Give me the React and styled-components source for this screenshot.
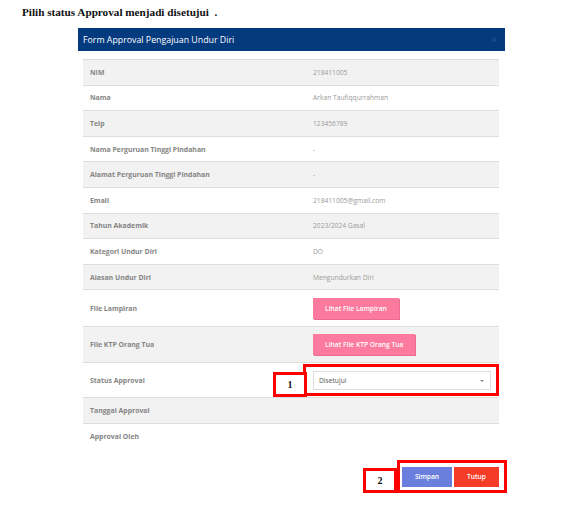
import React from "react";
import styled, { createGlobalStyle } from "styled-components";

const rows = [
  { label: "NIM", value: "218411005" },
  { label: "Nama", value: "Arkan Taufiqqurrahman" },
  { label: "Telp", value: "123456789" },
  { label: "Nama Perguruan Tinggi Pindahan", value: "-" },
  { label: "Alamat Perguruan Tinggi Pindahan", value: "-" },
  { label: "Email", value: "218411005@gmail.com" },
  { label: "Tahun Akademik", value: "2023/2024 Gasal" },
  { label: "Kategori Undur Diri", value: "DO" },
  { label: "Alasan Undur Diri", value: "Mengundurkan Diri" }
];

const App = () => {
  return (
    <Page>
      <GlobalStyle />
      <Heading>Pilih status Approval menjadi disetujui &nbsp;.</Heading>
      <Modal>
        <Header>
          <HeaderTitle>Form Approval Pengajuan Undur Diri</HeaderTitle>
          <Close>×</Close>
        </Header>
        <Body>
          <Table>
            {rows.map((r, i) => (
              <Row key={r.label} striped={i % 2 === 0}>
                <Label>{r.label}</Label>
                <Value>{r.value}</Value>
              </Row>
            ))}
            <Row tall>
              <Label>File Lampiran</Label>
              <Value>
                <PinkButton>Lihat File Lampiran</PinkButton>
              </Value>
            </Row>
            <Row striped tall>
              <Label>File KTP Orang Tua</Label>
              <Value>
                <PinkButton>Lihat File KTP Orang Tua</PinkButton>
              </Value>
            </Row>
            <Row status>
              <Label>Status Approval</Label>
              <MarkedValue>
                <Badge side>1</Badge>
                <Select>
                  <span>Disetujui</span>
                  <Caret />
                </Select>
              </MarkedValue>
            </Row>
            <Row striped>
              <Label>Tanggal Approval</Label>
              <Value />
            </Row>
            <Row last>
              <Label>Approval Oleh</Label>
              <Value />
            </Row>
          </Table>
          <Footer>
            <Badge>2</Badge>
            <ButtonFrame>
              <ActionButton color="#6a7fdd" width="50px">Simpan</ActionButton>
              <ActionButton color="#f53c28" width="45px">Tutup</ActionButton>
            </ButtonFrame>
          </Footer>
        </Body>
      </Modal>
    </Page>
  );
};

const GlobalStyle = createGlobalStyle`
  body {
    margin: 0;
    background: #fff;
  }
`;

const Page = styled.div`
  width: 566px;
  height: 526px;
  overflow: hidden;
  padding-top: 6px;
  box-sizing: border-box;
`;

const Heading = styled.div`
  font-family: "Liberation Serif", serif;
  font-weight: bold;
  font-size: 11.2px;
  color: #111;
  margin-left: 22px;
  height: 22px;
`;

const Modal = styled.div`
  margin-left: 78px;
  width: 427px;
  font-family: "Open Sans", sans-serif;
`;

const Header = styled.div`
  height: 23px;
  background: #043a7e;
  display: flex;
  align-items: center;
  justify-content: space-between;
  padding: 0 8px 0 5px;
`;

const HeaderTitle = styled.span`
  color: #fff;
  font-size: 8.8px;
`;

const Close = styled.span`
  color: #2b5a95;
  font-size: 9px;
`;

const Body = styled.div`
  padding: 8px 6px 0 5px;
`;

const Table = styled.div`
  border-top: 1px solid #ddd;
`;

const Row = styled.div`
  display: grid;
  grid-template-columns: 220px 1fr;
  align-items: center;
  height: ${(p) => (p.tall ? "36.5px" : p.status ? "35px" : "25.6px")};
  background: ${(p) => (p.striped ? "#f2f2f2" : "#fff")};
  border-bottom: ${(p) => (p.last ? "none" : "1px solid #ddd")};
  box-sizing: border-box;
`;

const Label = styled.div`
  padding-left: 7px;
  font-size: 6.9px;
  font-weight: 700;
  color: #858585;
`;

const Value = styled.div`
  padding-left: 10px;
  font-size: 6.7px;
  color: #9a9a9a;
  display: flex;
  align-items: center;
`;

const MarkedValue = styled.div`
  position: relative;
  height: 32px;
  box-sizing: border-box;
  border: 3px solid #ff0000;
  padding: 4px 5px 3px 7px;
  display: flex;
`;

const Badge = styled.div`
  width: 34px;
  height: 25px;
  box-sizing: border-box;
  border: 3px solid #ff0000;
  background: #fff;
  display: flex;
  align-items: center;
  justify-content: center;
  font-family: "Liberation Serif", serif;
  font-weight: bold;
  font-size: 10px;
  color: #111;
  ${(p) =>
    p.side &&
    `
    position: absolute;
    right: 100%;
    top: 5px;
    margin-right: -1px;
  `}
`;

const Select = styled.div`
  flex: 1;
  border: 1px solid #ddd;
  background: #fff;
  display: flex;
  align-items: center;
  justify-content: space-between;
  padding: 0 6px 0 5px;
  font-size: 6.7px;
  color: #555;
`;

const Caret = styled.span`
  width: 0;
  height: 0;
  border-left: 2px solid transparent;
  border-right: 2px solid transparent;
  border-top: 2px solid #888;
`;

const PinkButton = styled.button`
  border: none;
  background: #fb7a9d;
  color: #fff;
  font-family: "Open Sans", sans-serif;
  font-size: 6.7px;
  font-weight: 600;
  height: 21px;
  padding: 0 12px;
  box-shadow: 1px 1px 0 #e86d8e;
`;

const Footer = styled.div`
  display: flex;
  justify-content: flex-end;
  align-items: flex-end;
  margin-top: 10px;
  margin-right: -8px;
`;

const ButtonFrame = styled.div`
  border: 3px solid #ff0000;
  padding: 4px 5px 3px 2px;
  display: flex;
  gap: 2px;
`;

const ActionButton = styled.button`
  border: none;
  background: ${(p) => p.color};
  color: #fff;
  font-family: "Open Sans", sans-serif;
  font-size: 6.7px;
  font-weight: 600;
  height: 20px;
  width: ${(p) => p.width};
  padding: 0;
`;

export default App;
